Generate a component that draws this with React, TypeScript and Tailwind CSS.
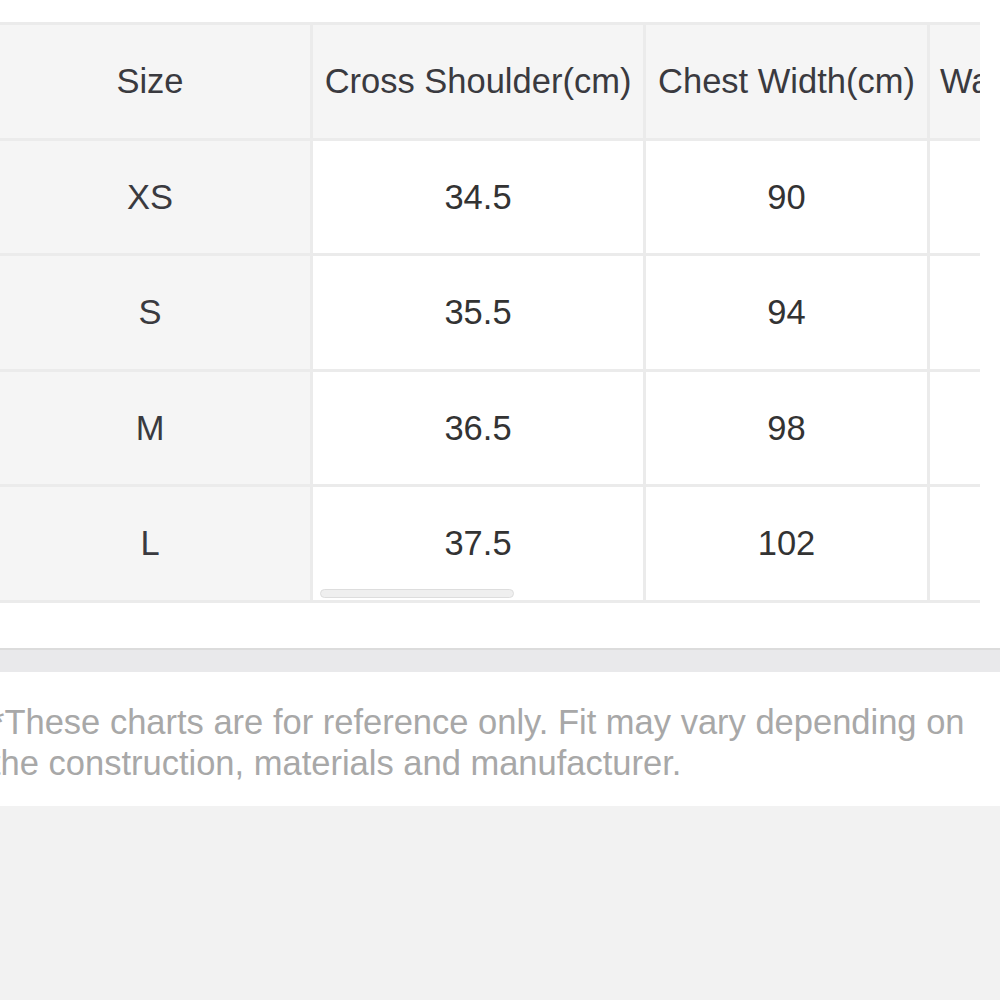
const rows = [
  { size: "XS", shoulder: "34.5", chest: "90" },
  { size: "S", shoulder: "35.5", chest: "94" },
  { size: "M", shoulder: "36.5", chest: "98" },
  { size: "L", shoulder: "37.5", chest: "102" },
];

const cell = "h-[112.6px] flex items-center justify-center border-r-[3px] border-[#ebebeb] shrink-0 whitespace-nowrap";

export default function App() {
  return (
    <div
      className="w-[1000px] h-[1000px] bg-[#f2f2f2] overflow-hidden text-[34.5px] leading-none"
      style={{ fontFamily: '"Liberation Sans", Arial, sans-serif' }}
    >
      {/* Size chart */}
      <div className="bg-white pt-[22px] pb-[45px]">
        <div className="relative w-[980px] overflow-hidden">
          <div className="-ml-[10px] w-[1300px] border-t-[3px] border-[#ebebeb]">
            {/* Header */}
            <div className="flex bg-[#f5f5f5] text-[#3a3a3f] border-b-[3px] border-[#ebebeb]">
              <div className={`${cell} w-[323px]`}>Size</div>
              <div className={`${cell} w-[333px]`}>Cross Shoulder(cm)</div>
              <div className={`${cell} w-[284px]`}>Chest Width(cm)</div>
              <div className={`${cell} w-[283px] !justify-start pl-[10px]`}>Waist(cm)</div>
            </div>
            {rows.map((r) => (
              <div key={r.size} className="flex text-[#333333] border-b-[3px] border-[#ebebeb]">
                <div className={`${cell} w-[323px] bg-[#f5f5f5] text-[#3a3a3f]`}>{r.size}</div>
                <div className={`${cell} w-[333px] bg-white`}>{r.shoulder}</div>
                <div className={`${cell} w-[284px] bg-white`}>{r.chest}</div>
                <div className={`${cell} w-[283px] bg-white`} />
              </div>
            ))}
          </div>
          {/* overlay scrollbar */}
          <div className="absolute left-[320px] top-[567px] w-[194px] h-[9px] rounded-full bg-[#efefef] border border-[#dddddd]" />
        </div>
      </div>

      {/* Divider band */}
      <div className="h-[24px] bg-[#e9e9eb] border-t-2 border-[#dcdcdc]" />

      {/* Footnote */}
      <div className="bg-white pt-[30px] pb-[22px]">
        <p className="-ml-[9px] text-[#a8a8a8] leading-[41px] whitespace-nowrap">
          *These charts are for reference only. Fit may vary depending on
          <br />
          the construction, materials and manufacturer.
        </p>
      </div>
    </div>
  );
}
